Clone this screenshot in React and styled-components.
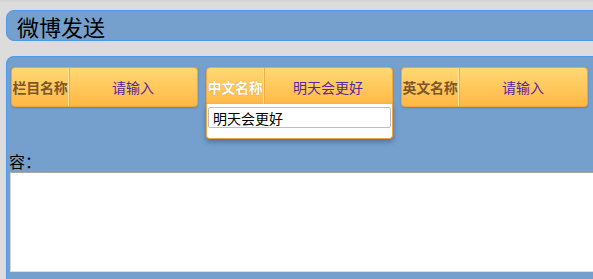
import React from "react";
import styled, { createGlobalStyle } from "styled-components";

const GlobalStyle = createGlobalStyle`
  html, body {
    margin: 0;
    padding: 0;
    background: #dcdcdc;
    overflow: hidden;
  }
  body {
    font-family: "Noto Sans CJK SC", "Liberation Sans", sans-serif;
  }
`;

const Page = styled.div`
  width: 640px;
  height: 279px;
  padding: 10px 0 0 6px;
  box-sizing: border-box;
  background: linear-gradient(#d2d2d2, #dcdcdc 3px);
  display: flex;
  flex-direction: column;
  gap: 15px;
`;

const Header = styled.div`
  height: 31px;
  box-sizing: border-box;
  background: #759fcc;
  border: 1px solid #4a9af2;
  border-radius: 8px;
  display: flex;
  align-items: center;
  padding-left: 10px;
  font-size: 22px;
  color: #000;
  line-height: 1;
`;

const Panel = styled.div`
  flex: 1;
  background: #759fcc;
  border: 1px solid #4a9af2;
  border-bottom: none;
  border-radius: 8px 8px 0 0;
  padding: 10px 0 0 4px;
  display: flex;
  flex-direction: column;
`;

const CardRow = styled.div`
  display: flex;
  gap: 8px;
  height: 40px;
`;

const CardWrap = styled.div`
  position: relative;
  width: 187px;
`;

const Card = styled.div`
  height: 40px;
  box-sizing: border-box;
  display: flex;
  border: 1px solid #eea73c;
  border-radius: 4px;
  background: linear-gradient(#ffd874, #ffb844);
  box-shadow: 0 1px 2px rgba(60, 80, 120, 0.35);
`;

const Label = styled.div`
  width: 56px;
  flex-shrink: 0;
  display: flex;
  align-items: center;
  justify-content: center;
  font-size: 14px;
  font-weight: bold;
  white-space: nowrap;
  letter-spacing: -0.3px;
  color: ${(p) => (p.$active ? "#ffffff" : "#7e5524")};
  text-shadow: ${(p) =>
    p.$active ? "0 0 1px rgba(150,100,30,0.6)" : "0 0 1px rgba(255,220,140,0.6)"};
  border-right: 1px solid #ffe39a;
  box-shadow: 1px 0 0 #eeae4c;
`;

const Value = styled.div`
  flex: 1;
  display: flex;
  align-items: center;
  justify-content: center;
  font-size: 14px;
  color: #55289f;
`;

const Dropdown = styled.div`
  position: absolute;
  left: 0;
  right: 0;
  top: 37px;
  background: #fff;
  border: 1px solid #eea73c;
  border-top: none;
  border-radius: 0 0 4px 4px;
  padding: 3px 1px 10px;
  box-shadow: 0 3px 5px rgba(40, 60, 100, 0.45);
  z-index: 2;
`;

const DropInput = styled.div`
  height: 21px;
  box-sizing: border-box;
  border: 1px solid #bdbdbd;
  border-radius: 2px;
  padding-left: 4px;
  display: flex;
  align-items: center;
  font-size: 14px;
  color: #000;
`;

const ContentLabel = styled.div`
  margin-top: 43px;
  height: 22px;
  line-height: 22px;
  font-size: 16px;
  color: #000;
  margin-left: -2px;
`;

const TextArea = styled.div`
  margin-left: -1px;
  height: 100px;
  box-sizing: border-box;
  background: #fff;
  border-top: 1px solid #a6a6a6;
  border-bottom: 1px solid #dedede;
  border-left: 1px solid #d6d6d6;
`;

const fields = [
  { label: "栏目名称", value: "请输入" },
  { label: "中文名称", value: "明天会更好", active: true, drop: "明天会更好" },
  { label: "英文名称", value: "请输入" },
];

export default function App() {
  return (
    <>
      <GlobalStyle />
      <Page>
        <Header>微博发送</Header>
        <Panel>
          <CardRow>
            {fields.map((f) => (
              <CardWrap key={f.label}>
                <Card>
                  <Label $active={f.active}>{f.label}</Label>
                  <Value>{f.value}</Value>
                </Card>
                {f.drop && (
                  <Dropdown>
                    <DropInput>{f.drop}</DropInput>
                  </Dropdown>
                )}
              </CardWrap>
            ))}
          </CardRow>
          <ContentLabel>容：</ContentLabel>
          <TextArea />
        </Panel>
      </Page>
    </>
  );
}
